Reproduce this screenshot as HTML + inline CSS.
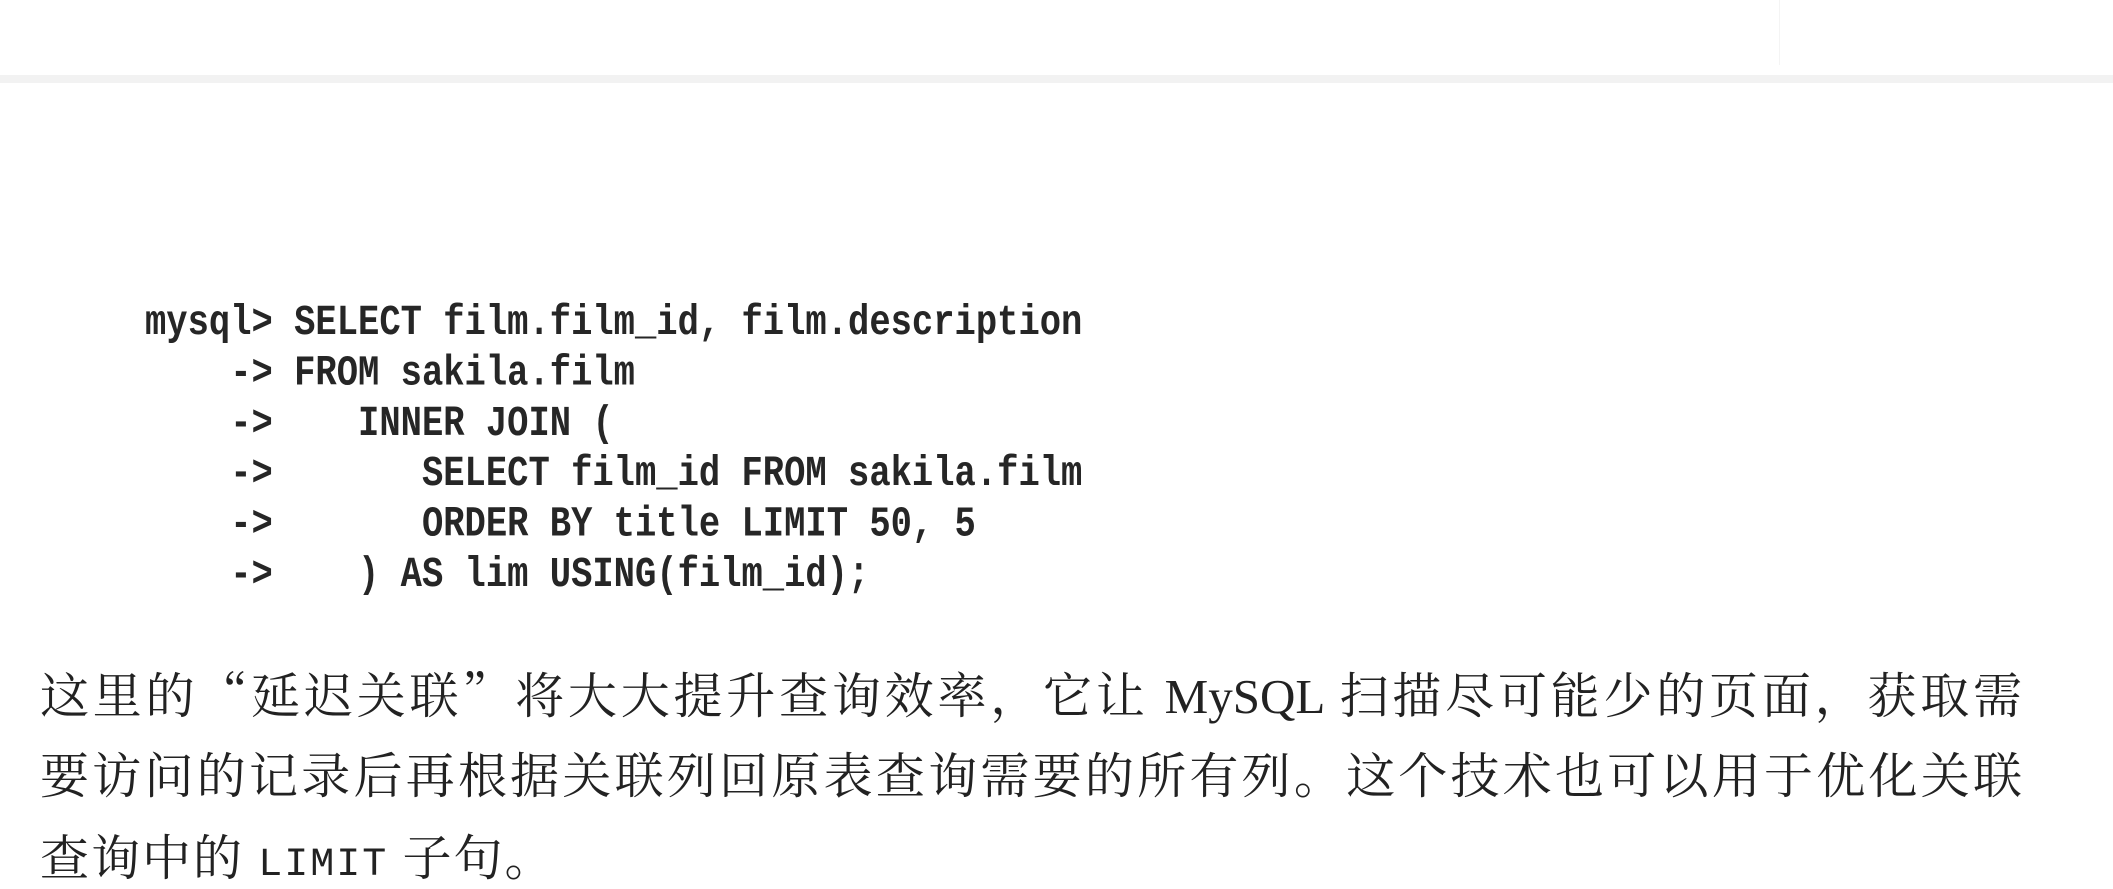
<!DOCTYPE html>
<html><head><meta charset="utf-8"><style>
html,body{margin:0;padding:0;background:#fff;width:2113px;height:889px;overflow:hidden;position:relative}
.band{position:absolute;left:0;top:75px;width:2113px;height:8px;background:#f2f2f2}
.vl{position:absolute;left:1779px;top:0;width:1px;height:65px;background:#f4f4f4}
.code{position:absolute;left:145px;top:298px;font-family:"Liberation Mono",monospace;font-weight:bold;font-size:35.5px;line-height:42.1px;color:#262626;white-space:pre;transform:scaleY(1.2);transform-origin:0 0}
.p{position:absolute;left:40px;font-family:"Liberation Serif","Noto Serif CJK SC",serif;font-size:49px;color:#222;white-space:nowrap}
.j{width:1982px;text-align:justify;text-align-last:justify;}
.p code{font-family:"Liberation Mono",monospace;font-size:40px}
.q{font-family:"Noto Serif CJK SC",serif}
</style></head><body>
<div class="band"></div><div class="vl"></div>
<div class="code">mysql&gt; SELECT film.film_id, film.description
    -&gt; FROM sakila.film
    -&gt;    INNER JOIN (
    -&gt;       SELECT film_id FROM sakila.film
    -&gt;       ORDER BY title LIMIT 50, 5
    -&gt;    ) AS lim USING(film_id);</div>
<div class="p j" style="top:658px">这里的<span class="q">“</span>延迟关联<span class="q">”</span>将大大提升查询效率，它让 MySQL 扫描尽可能少的页面，获取需</div>
<div class="p j" style="top:738px">要访问的记录后再根据关联列回原表查询需要的所有列。这个技术也可以用于优化关联</div>
<div class="p" style="top:820px;letter-spacing:2px">查询中的 <code>LIMIT</code> 子句。</div>
</body></html>
